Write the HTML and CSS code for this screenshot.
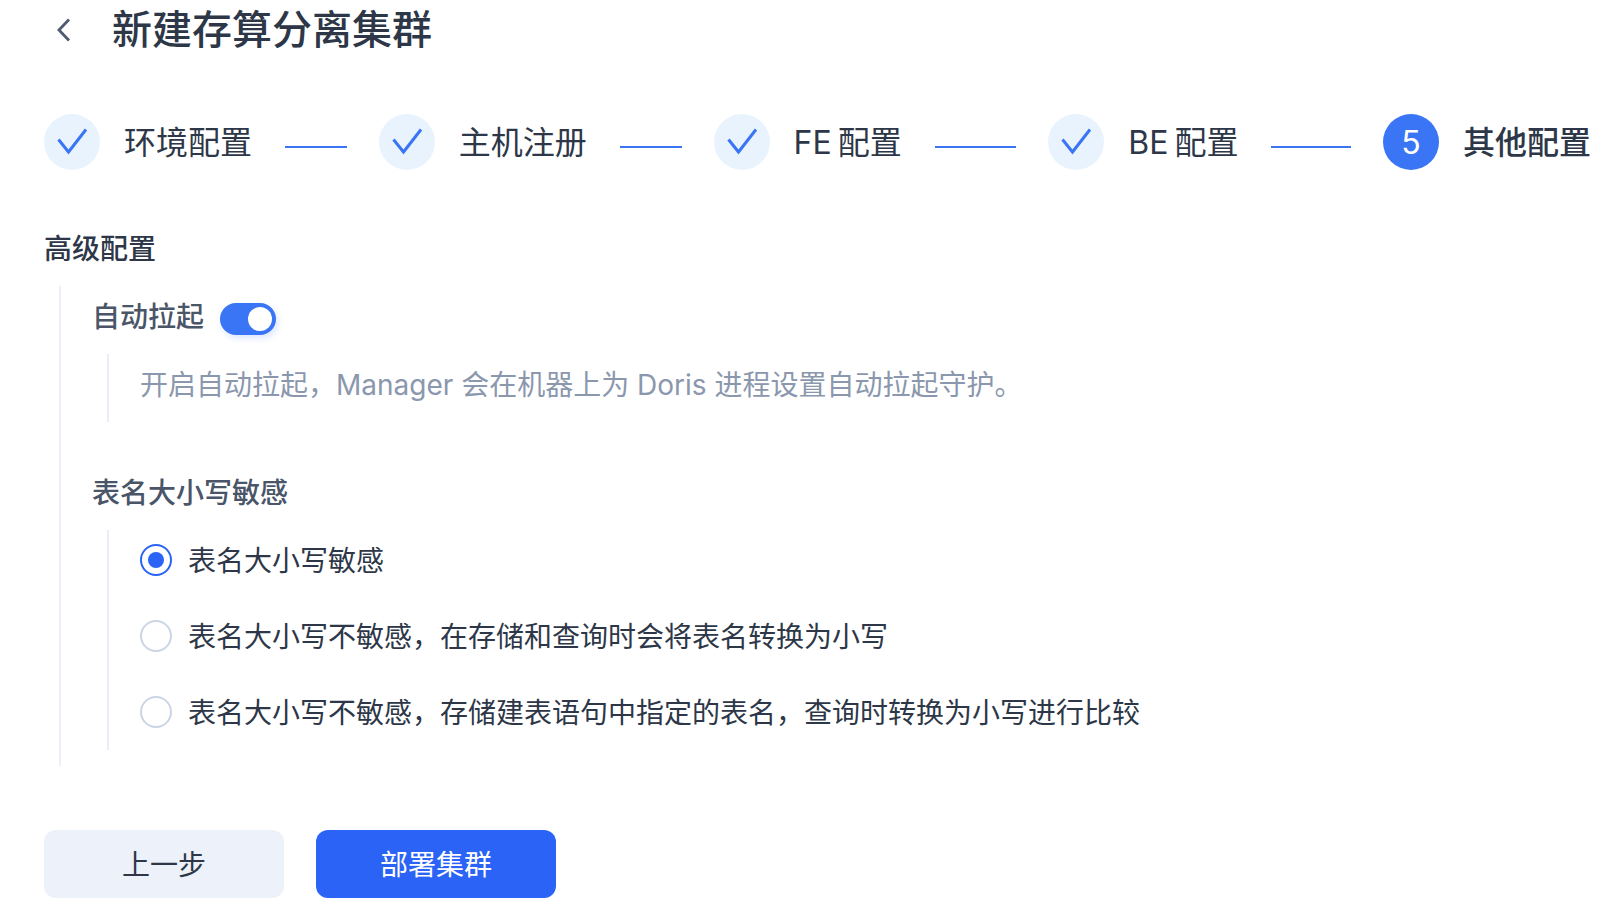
FILE: index.html
```html
<!DOCTYPE html>
<html lang="zh-CN">
<head>
<meta charset="utf-8">
<title>新建存算分离集群</title>
<link rel="stylesheet" href="styles.css">
</head>
<body>
<header class="header">
  <svg class="back" viewBox="0 0 14 24" width="14" height="24"><path d="M12 1.5 2 12l10 10.5" fill="none" stroke="#4f5b72" stroke-width="2.8"/></svg>
  <h1 class="title">新建存算分离集群</h1>
</header>
<div class="steps">
  <div class="step">
    <span class="dot"><svg viewBox="0 0 56 56" width="56" height="56"><path d="M14.5 25.5 24.5 38 42 15.5" fill="none" stroke="#3a75f5" stroke-width="3"/></svg></span>
    <span class="step-name">环境配置</span><span class="step-line"></span>
  </div>
  <div class="step">
    <span class="dot"><svg viewBox="0 0 56 56" width="56" height="56"><path d="M14.5 25.5 24.5 38 42 15.5" fill="none" stroke="#3a75f5" stroke-width="3"/></svg></span>
    <span class="step-name">主机注册</span><span class="step-line"></span>
  </div>
  <div class="step">
    <span class="dot"><svg viewBox="0 0 56 56" width="56" height="56"><path d="M14.5 25.5 24.5 38 42 15.5" fill="none" stroke="#3a75f5" stroke-width="3"/></svg></span>
    <span class="step-name">FE 配置</span><span class="step-line"></span>
  </div>
  <div class="step">
    <span class="dot"><svg viewBox="0 0 56 56" width="56" height="56"><path d="M14.5 25.5 24.5 38 42 15.5" fill="none" stroke="#3a75f5" stroke-width="3"/></svg></span>
    <span class="step-name">BE 配置</span><span class="step-line"></span>
  </div>
  <div class="step step-last">
    <span class="dot dot-active">5</span>
    <span class="step-name step-name-active">其他配置</span>
  </div>
</div>
<h2 class="section-title">高级配置</h2>
<div class="section-body">
  <div class="label-row">
    <span class="label">自动拉起</span>
    <span class="switch"><span class="knob"></span></span>
  </div>
  <div class="hint-box">开启自动拉起，Manager 会在机器上为 Doris 进程设置自动拉起守护。</div>
  <div class="label label-gap">表名大小写敏感</div>
  <div class="radio-box">
    <div class="radio-row"><span class="radio radio-on"></span><span class="radio-text">表名大小写敏感</span></div>
    <div class="radio-row"><span class="radio"></span><span class="radio-text">表名大小写不敏感，在存储和查询时会将表名转换为小写</span></div>
    <div class="radio-row"><span class="radio"></span><span class="radio-text">表名大小写不敏感，存储建表语句中指定的表名，查询时转换为小写进行比较</span></div>
  </div>
</div>
<div class="actions">
  <button class="btn btn-ghost" type="button">上一步</button>
  <button class="btn btn-primary" type="button">部署集群</button>
</div>
</body>
</html>
```
FILE: styles.css
```css
* { box-sizing: border-box; }
html, body { margin: 0; padding: 0; height: 910px; overflow: hidden; background: #fff; }
body { font-family: Inter, "Noto Sans CJK SC", sans-serif; font-size: 28px; color: #2d3748; }
.header { display: flex; align-items: center; height: 60px; padding-left: 57px; }
.back { margin-right: 41px; flex: none; }
.title { margin: 0; font-size: 40px; line-height: 60px; font-weight: 500; color: #2d3748; }
.steps { display: flex; margin: 54px 0 0 44px; width: 1547px; height: 56px; }
.step { flex: 1 1 0; display: flex; align-items: center; }
.step-last { flex: none; }
.dot { flex: none; width: 56px; height: 56px; border-radius: 50%; background: #e9f3fe; display: flex; align-items: center; justify-content: center; }
.dot-active { background: #3a75f5; color: #fff; font-size: 32px; }
.step-name { flex: none; margin-left: 24px; padding-top: 2px; font-size: 32px; line-height: 56px; word-spacing: -3px; color: #2d3748; }
.step-name-active { font-weight: 500; }
.step-line { flex: 1; height: 2px; margin: 10px 32px 0 33px; background: #3a75f5; }
.section-title { margin: 58px 0 0 44px; font-size: 28px; line-height: 42px; font-weight: 500; color: #2d3748; }
.section-body { margin: 16px 0 0 59px; height: 480px; padding: 10px 0 0 31px; border-left: 2px solid #eceef8; }
.label-row { display: flex; align-items: flex-start; height: 42px; }
.label { font-size: 28px; line-height: 42px; font-weight: 500; color: #4a5568; }
.label-gap { margin-top: 50px; }
.switch { width: 56px; height: 32px; margin: 7px 0 0 16px; padding: 4px; border-radius: 16px; background: #3a75f5; display: flex; justify-content: flex-end; box-shadow: 2px 3px 6px rgba(58,117,245,.18); }
.knob { width: 24px; height: 24px; border-radius: 50%; background: #fff; }
.hint-box { margin: 16px 0 0 15px; height: 68px; padding-left: 31px; border-left: 2px solid #e9edf5; line-height: 62px; color: #8a97ad; }
.radio-box { margin: 16px 0 0 15px; height: 220px; padding-left: 31px; border-left: 2px solid #e9edf5; display: flex; flex-direction: column; gap: 16px; }
.radio-row { display: flex; align-items: center; height: 60px; gap: 16px; color: #2d3748; }
.radio-text { padding-bottom: 2px; }
.radio { flex: none; width: 32px; height: 32px; border-radius: 50%; border: 2px solid #cbd5e4; display: flex; align-items: center; justify-content: center; }
.radio-on { border-color: #2b63f6; }
.radio-on::after { content: ""; width: 16px; height: 16px; border-radius: 50%; background: #2b63f6; }
.actions { display: flex; gap: 32px; margin: 64px 0 0 44px; }
.btn { width: 240px; height: 68px; border: 0; border-radius: 12px; font: inherit; padding: 0 0 2px; }
.btn-ghost { background: #edf1f9; color: #2d3748; }
.btn-primary { background: #2b63f6; color: #fff; }
```
